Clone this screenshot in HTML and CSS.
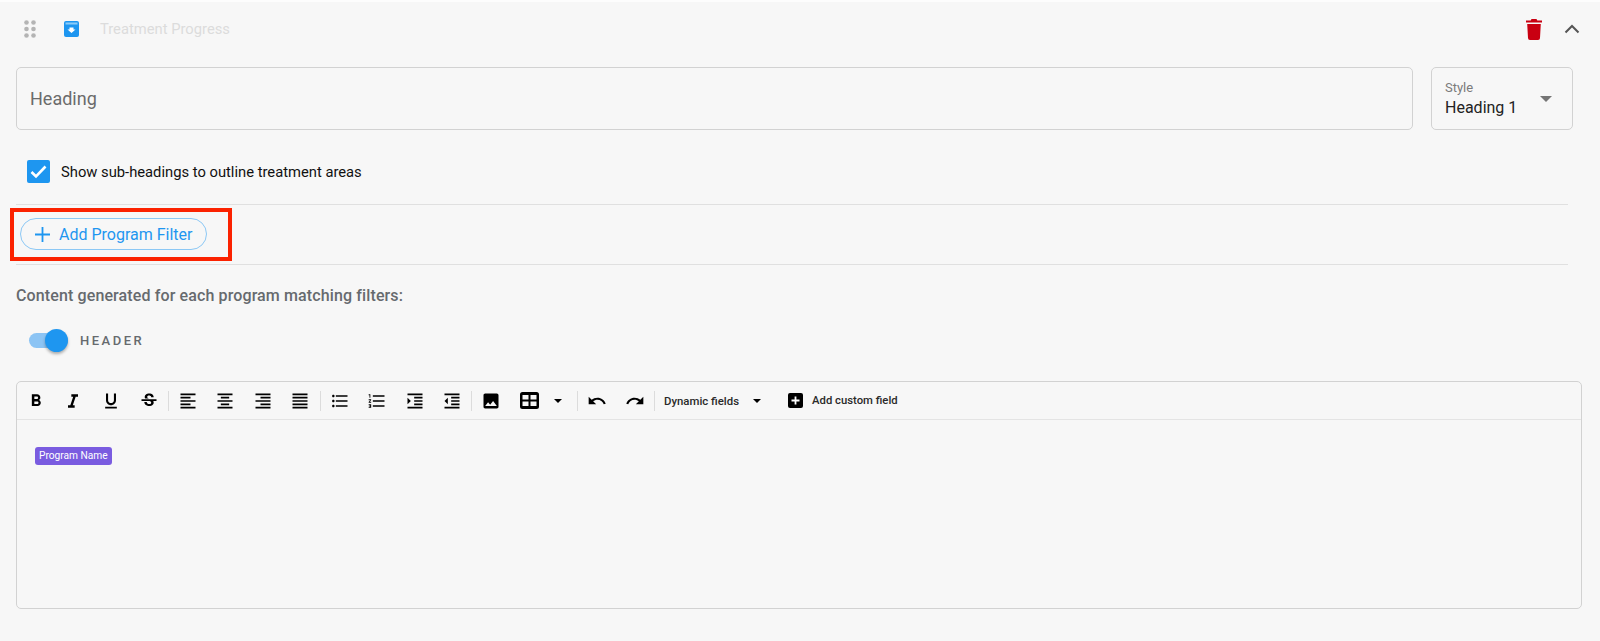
FILE: index.html
```html
<!DOCTYPE html>
<html lang="en">
<head>
    <meta charset="UTF-8">
    <title>Treatment Progress</title>
    <link rel="stylesheet" href="styles.css">
</head>
<body>
    <div class="top-bar">
        <svg class="drag" width="12" height="18" viewBox="0 0 12 18"><g fill="#b4b4b4"><circle cx="2.500" cy="2.500" r="2.300"/><circle cx="9.500" cy="2.500" r="2.300"/><circle cx="2.500" cy="9" r="2.300"/><circle cx="9.500" cy="9" r="2.300"/><circle cx="2.500" cy="15.500" r="2.300"/><circle cx="9.500" cy="15.500" r="2.300"/></g></svg>
        <svg class="block-icon" width="15" height="16" viewBox="0 0 15 16"><rect width="15" height="16" rx="2" fill="#1e96f0"/><rect x="1.500" y="1.500" width="12" height="2" fill="#8ccbf8"/><path d="M5.500 6.500h4v2h2L7.500 12 3.500 8.500h2z" fill="#fff"/></svg>
        <span class="block-title">Treatment Progress</span>
        <svg class="trash" width="16" height="21" viewBox="0 0 16 21"><path d="M5.500 0h5l.8 1.500H16v2H0v-2h4.700zM1.200 5h13.600l-.8 14a2 2 0 0 1-2 2H4a2 2 0 0 1-2-2z" fill="#c90011"/></svg>
        <svg class="chevron" width="16" height="10" viewBox="0 0 16 10"><path d="M1.500 8.500 8 2l6.500 6.500" fill="none" stroke="#555" stroke-width="2"/></svg>
    </div>

    <div class="fields">
        <div class="field heading-field">Heading</div>
        <div class="field style-field">
            <div>
                <p class="style-label">Style</p>
                <p class="style-value">Heading 1</p>
            </div>
            <svg width="12" height="6" viewBox="0 0 12 6"><path d="M0 0h12L6 6z" fill="#757575"/></svg>
        </div>
    </div>

    <div class="check-row">
        <svg width="23" height="23" viewBox="0 0 23 23"><rect width="23" height="23" rx="2" fill="#1e96f0"/><path d="M4.500 12l4.500 4.500 9.500-10" fill="none" stroke="#fff" stroke-width="2.600"/></svg>
        <span>Show sub-headings to outline treatment areas</span>
    </div>

    <div class="filter-row">
        <button class="add-filter">
            <svg width="15" height="15" viewBox="0 0 15 15"><path d="M7.500 0v15M0 7.500h15" stroke="#1e96f0" stroke-width="1.800"/></svg>
            Add Program Filter
        </button>
        <div class="red-box"></div>
    </div>

    <p class="content-label">Content generated for each program matching filters:</p>

    <div class="toggle-row">
        <div class="toggle"><div class="knob"></div></div>
        <span>HEADER</span>
    </div>

    <div class="editor">
        <div class="toolbar">
            <span class="tool"><svg viewBox="0 0 24 24"><path d="M15.600 10.790c.97-.67 1.650-1.770 1.650-2.790 0-2.260-1.750-4-4-4H7v14h7.040c2.090 0 3.710-1.700 3.710-3.790 0-1.520-.86-2.820-2.150-3.420zM10 6.500h3c.83 0 1.500.67 1.500 1.500s-.67 1.500-1.500 1.500h-3v-3zm3.500 9H10v-3h3.500c.83 0 1.500.67 1.500 1.500s-.67 1.500-1.500 1.500z"/></svg></span>
            <span class="tool"><svg viewBox="0 0 24 24"><path d="M10 4v3h2.210l-3.420 10H6v3h8v-3h-2.210l3.420-10H18V4z"/></svg></span>
            <span class="tool"><svg viewBox="0 0 24 24"><path d="M12 17c3.310 0 6-2.690 6-6V3h-2.500v8c0 1.930-1.570 3.500-3.500 3.500S8.500 12.930 8.500 11V3H6v8c0 3.310 2.690 6 6 6zm-7 2v2h14v-2H5z"/></svg></span>
            <span class="tool"><svg viewBox="0 0 24 24"><path d="M7.240 8.750c-.26-.48-.39-1.030-.39-1.670 0-.61.13-1.160.4-1.670.26-.5.63-.93 1.110-1.290.48-.35 1.050-.63 1.700-.83.66-.19 1.390-.29 2.180-.29.81 0 1.540.11 2.210.34.660.22 1.230.54 1.690.94.470.4.830.88 1.080 1.430.25.550.38 1.150.38 1.810h-3.010c0-.31-.05-.59-.15-.85-.09-.27-.24-.49-.44-.68-.2-.19-.45-.33-.75-.44-.3-.1-.66-.16-1.060-.16-.39 0-.74.04-1.030.13-.29.09-.53.21-.72.36-.19.16-.34.34-.44.55-.1.21-.15.43-.15.66 0 .48.25.88.74 1.210.38.250.77.480 1.410.700H7.390c-.05-.080-.11-.170-.15-.250zM21 12v-2H3v2h9.620c.18.070.400.140.550.200.370.170.660.340.870.510.210.170.350.360.430.570.070.200.110.430.110.690 0 .230-.050.450-.140.660-.090.200-.230.380-.420.530-.190.150-.420.260-.710.350-.290.080-.630.130-1.010.130-.430 0-.830-.040-1.180-.130s-.660-.230-.910-.420c-.250-.190-.450-.440-.59-.750-.140-.310-.250-.760-.250-1.210H6.400c0 .550.080 1.130.24 1.580.160.450.370.850.650 1.210.280.350.600.660.980.920.370.260.780.480 1.220.650.440.170.900.300 1.380.390.480.080.960.130 1.440.130.800 0 1.530-.090 2.180-.280s1.210-.450 1.670-.790c.460-.340.820-.770 1.070-1.270s.380-1.070.380-1.710c0-.600-.100-1.140-.310-1.610-.050-.110-.110-.230-.170-.330H21z"/></svg></span>
            <i class="sep"></i>
            <span class="tool"><svg viewBox="0 0 24 24"><path d="M15 15H3v2h12v-2zm0-8H3v2h12V7zM3 13h18v-2H3v2zm0 8h18v-2H3v2zM3 3v2h18V3H3z"/></svg></span>
            <span class="tool"><svg viewBox="0 0 24 24"><path d="M7 15v2h10v-2H7zm-4 6h18v-2H3v2zm0-8h18v-2H3v2zm4-6v2h10V7H7zM3 3v2h18V3H3z"/></svg></span>
            <span class="tool"><svg viewBox="0 0 24 24"><path d="M3 21h18v-2H3v2zm6-4h12v-2H9v2zm-6-4h18v-2H3v2zm6-4h12V7H9v2zM3 3v2h18V3H3z"/></svg></span>
            <span class="tool"><svg viewBox="0 0 24 24"><path d="M3 21h18v-2H3v2zm0-4h18v-2H3v2zm0-4h18v-2H3v2zm0-4h18V7H3v2zm0-6v2h18V3H3z"/></svg></span>
            <i class="sep"></i>
            <span class="tool"><svg viewBox="0 0 24 24"><path d="M4 10.500c-.83 0-1.500.67-1.500 1.500s.67 1.500 1.500 1.500 1.500-.67 1.500-1.500-.67-1.500-1.500-1.500zm0-6c-.83 0-1.500.67-1.500 1.500S3.170 7.500 4 7.500 5.500 6.830 5.500 6 4.830 4.500 4 4.500zm0 12c-.83 0-1.500.68-1.500 1.500s.68 1.500 1.500 1.500 1.500-.68 1.500-1.500-.67-1.500-1.500-1.500zM7 19h14v-2H7v2zm0-6h14v-2H7v2zm0-8v2h14V5H7z"/></svg></span>
            <span class="tool"><svg viewBox="0 0 24 24"><path d="M2 17h2v.500H3v1h1v.500H2v1h3v-4H2v1zm1-9h1V4H2v1h1v3zm-1 3h1.800L2 13.100v.900h3v-1H3.200L5 10.900V10H2v1zm5-6v2h14V5H7zm0 14h14v-2H7v2zm0-6h14v-2H7v2z"/></svg></span>
            <span class="tool"><svg viewBox="0 0 24 24"><path d="M3 21h18v-2H3v2zM3 8v8l4-4-4-4zm8 9h10v-2H11v2zM3 3v2h18V3H3zm8 6h10V7H11v2zm0 4h10v-2H11v2z"/></svg></span>
            <span class="tool"><svg viewBox="0 0 24 24"><path d="M11 17h10v-2H11v2zm-8-5 4 4V8l-4 4zm0 9h18v-2H3v2zM3 3v2h18V3H3zm8 6h10V7H11v2zm0 4h10v-2H11v2z"/></svg></span>
            <i class="sep"></i>
            <span class="tool"><svg viewBox="0 0 24 24"><path d="M21 19V5c0-1.100-.9-2-2-2H5c-1.100 0-2 .9-2 2v14c0 1.100.9 2 2 2h14c1.100 0 2-.9 2-2zM8.500 13.500l2.500 3.010L14.500 12l4.500 6H5l3.500-4.500z"/></svg></span>
            <span class="tool"><svg class="table-icon" viewBox="0 0 19 17"><path fill-rule="evenodd" d="M2.500 0h14A2.500 2.500 0 0 1 19 2.500v12a2.500 2.500 0 0 1-2.500 2.500h-14A2.500 2.500 0 0 1 0 14.500v-12A2.500 2.500 0 0 1 2.500 0zM2.500 3v4.500h6V3zm8 0v4.500h6V3zm-8 6.500V14h6V9.500zm8 0V14h6V9.500z"/></svg></span>
            <svg class="caret caret-table" width="8" height="4" viewBox="0 0 8 4"><path d="M0 0h8L4 4z"/></svg>
            <i class="sep"></i>
            <span class="tool"><svg viewBox="0 0 24 24"><path d="M12.500 8c-2.650 0-5.050.99-6.900 2.600L2 7v9h9l-3.620-3.620c1.390-1.160 3.160-1.880 5.120-1.880 3.540 0 6.550 2.310 7.600 5.500l2.370-.78C21.080 11.030 17.150 8 12.500 8z"/></svg></span>
            <span class="tool"><svg viewBox="0 0 24 24"><path d="M18.400 10.600C16.550 8.990 14.150 8 11.500 8c-4.650 0-8.580 3.030-9.960 7.220L3.900 16c1.050-3.190 4.050-5.500 7.600-5.500 1.950 0 3.730.72 5.120 1.880L13 16h9V7l-3.600 3.600z"/></svg></span>
            <i class="sep"></i>
            <span class="dynamic">Dynamic fields</span>
            <svg class="caret caret-dynamic" width="8" height="4" viewBox="0 0 8 4"><path d="M0 0h8L4 4z"/></svg>
            <svg class="custom-icon" width="15" height="15" viewBox="0 0 15 15"><rect width="15" height="15" rx="2"/><path d="M7.500 3.500v8M3.500 7.500h8" stroke="#fff" stroke-width="1.800"/></svg>
            <span class="custom-field">Add custom field</span>
        </div>
        <div class="editor-body">
            <span class="chip">Program Name</span>
        </div>
    </div>
</body>
</html>
```

FILE: styles.css
```css
* {
    margin: 0;
    padding: 0;
    box-sizing: border-box;
}

body {
    height: 641px;
    overflow: hidden;
    background-color: #f7f7f7;
    border-top: 2px solid #fdfdfd;
    font-family: Roboto, sans-serif;
    color: #111;
}

.top-bar {
    display: flex;
    align-items: center;
    height: 54px;
    padding: 0 20px 0 24px;
}

.block-icon {
    margin-left: 28px;
}

.block-title {
    margin-left: 21px;
    font-size: 14.75px;
    color: #dcdcdc;
}

.trash {
    margin-left: auto;
}

.chevron {
    margin-left: 22px;
}

.fields {
    display: flex;
    gap: 18px;
    margin: 11px 27px 0 16px;
}

.field {
    height: 63px;
    border: 1px solid #d2d2d2;
    border-radius: 5px;
}

.heading-field {
    flex: 1;
    padding-left: 13px;
    font-size: 18px;
    line-height: 61px;
    color: #6b6b6b;
}

.style-field {
    display: flex;
    align-items: center;
    justify-content: space-between;
    width: 142px;
    padding: 0 20px 0 13px;
}

.style-label {
    font-size: 13px;
    line-height: 17px;
    color: #7b7b7b;
}

.style-value {
    font-size: 16px;
    line-height: 23px;
    color: #222;
}

.check-row {
    display: flex;
    align-items: center;
    gap: 11px;
    margin: 30px 0 0 27px;
    font-size: 14.75px;
}

.filter-row {
    position: relative;
    height: 61px;
    margin: 21px 32px 0 16px;
    padding: 13px 0 0 4px;
    border-top: 1px solid #e0e0e0;
    border-bottom: 1px solid #e0e0e0;
}

.add-filter {
    display: flex;
    align-items: center;
    gap: 9px;
    width: 187px;
    height: 32px;
    padding-left: 14px;
    background: none;
    border: 1px solid #8cc8f5;
    border-radius: 16px;
    font-family: Roboto, sans-serif;
    font-size: 16px;
    color: #1e96f0;
}

/* annotation drawn over the screenshot */
.red-box {
    position: absolute;
    left: -6px;
    top: 3px;
    width: 222px;
    height: 53px;
    border: 4px solid #fb2200;
}

.content-label {
    margin: 21px 0 0 16px;
    font-size: 16px;
    font-weight: 500;
    letter-spacing: 0.12px;
    color: #666a6e;
}

.toggle-row {
    display: flex;
    align-items: center;
    gap: 12px;
    height: 15px;
    margin: 28px 0 0 29px;
    font-size: 13px;
    font-weight: 500;
    letter-spacing: 2.5px;
    color: #666a6e;
}

.toggle {
    position: relative;
    width: 39px;
    height: 15px;
    background-color: #8cc4f4;
    border-radius: 8px;
}

.knob {
    position: absolute;
    right: 0;
    top: -4px;
    width: 23px;
    height: 23px;
    background-color: #1e96f0;
    border-radius: 50%;
    box-shadow: 0 2px 3px rgba(0, 0, 0, 0.3);
}

.editor {
    height: 228px;
    margin: 33px 18px 0 16px;
    border: 1px solid #d2d2d2;
    border-radius: 5px;
}

.toolbar {
    display: flex;
    align-items: center;
    height: 38px;
    border-bottom: 1px solid #e4e4e4;
}

.tool {
    display: flex;
    justify-content: center;
    width: 37.6px;
}

.tool svg {
    width: 20px;
    height: 20px;
}

.tool .table-icon {
    width: 19px;
    height: 17px;
}

.sep {
    flex: none;
    width: 1px;
    height: 20px;
    margin: 0 0.25px;
    background-color: #dcdcdc;
}

.caret {
    flex: none;
}

.caret-table {
    margin: 0 15px 0 6px;
}

.caret-dynamic {
    margin-left: 14px;
}

.dynamic {
    margin-left: 9px;
    font-size: 11.4px;
    font-weight: 500;
    color: #2a2a2a;
}

.custom-icon {
    margin-left: 27px;
}

.custom-field {
    margin-left: 9px;
    font-size: 11.3px;
    font-weight: 500;
    color: #2a2a2a;
}

.editor-body {
    padding: 24px 0 0 18px;
}

.chip {
    display: inline-block;
    height: 18px;
    padding: 0 4px;
    background-color: #7a5ce0;
    border-radius: 3px;
    font-size: 10.2px;
    line-height: 18px;
    color: #fff;
}
```
